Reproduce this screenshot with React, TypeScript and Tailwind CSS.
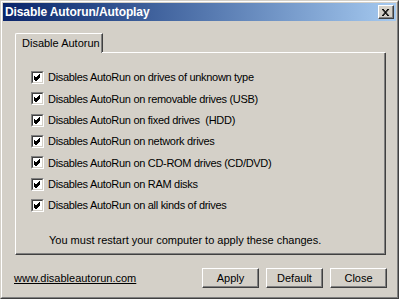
import React from "react";

const items = [
  "Disables AutoRun on drives of unknown type",
  "Disables AutoRun on removable drives (USB)",
  "Disables AutoRun on fixed drives  (HDD)",
  "Disables AutoRun on network drives",
  "Disables AutoRun on CD-ROM drives (CD/DVD)",
  "Disables AutoRun on RAM disks",
  "Disables AutoRun on all kinds of drives",
];

function CheckBox() {
  return (
    <span className="block h-[13px] w-[13px] shrink-0 border border-t-[#808080] border-l-[#808080] border-r-white border-b-white">
      <span className="block h-full w-full border border-t-[#404040] border-l-[#404040] border-r-[#d4d0c8] border-b-[#d4d0c8] bg-white">
        <svg width="9" height="9" viewBox="0 0 9 9" className="block">
          <path d="M1 3.5 L3 5.5 L7 1.5 M1 4.5 L3 6.5 L7 2.5 M1 5.5 L3 7.5 L7 3.5" stroke="#000" strokeWidth="1" fill="none" shapeRendering="crispEdges" />
        </svg>
      </span>
    </span>
  );
}

function Button({ label }: { label: string }) {
  return (
    <button className="h-[20px] w-[57px] border border-t-white border-l-white border-r-[#404040] border-b-[#404040] bg-[#d4d0c8] text-[11px] text-black shadow-[inset_-1px_-1px_0_#808080]">
      {label}
    </button>
  );
}

export default function App() {
  return (
    <div
      className="h-[299px] w-[399px] border border-t-[#d4d0c8] border-l-[#d4d0c8] border-r-[#404040] border-b-[#404040] bg-[#d4d0c8] text-black"
      style={{ fontFamily: '"Liberation Sans", Arial, sans-serif' }}
    >
      <div className="flex h-full flex-col border border-t-white border-l-white border-r-[#808080] border-b-[#808080] p-px">
        {/* title bar */}
        <div className="flex h-[18px] items-center justify-between bg-gradient-to-r from-[#0a246a] to-[#a6caf0] pl-[2px] pr-[2px]">
          <span className="text-[12px] font-bold leading-none tracking-[-0.1px] text-white">Disable Autorun/Autoplay</span>
          <span className="flex h-[14px] w-[16px] items-center justify-center border border-t-white border-l-white border-r-[#404040] border-b-[#404040] bg-[#d4d0c8] shadow-[inset_-1px_-1px_0_#808080]">
            <svg width="8" height="7" viewBox="0 0 8 7" className="block">
              <path d="M0 0 L6 7 M1 0 L7 7 M6 0 L0 7 M7 0 L1 7" stroke="#000" strokeWidth="1" fill="none" />
            </svg>
          </span>
        </div>

        {/* tab */}
        <div className="ml-[12px] mt-[12px] flex">
          <div className="flex h-[20px] w-[88px] items-center rounded-tl-[2px] border-t border-l border-r border-t-white border-l-white border-r-[#404040] pl-[6px] text-[11px] shadow-[inset_-1px_0_0_#808080]">
            Disable Autorun
          </div>
          <div className="flex-1" />
        </div>

        {/* panel */}
        <div className="relative ml-[12px] mr-[10px] h-[202px] border border-t-0 border-l-white border-r-[#404040] border-b-[#404040] shadow-[inset_-1px_-1px_0_#808080]">
          <div className="absolute -top-px left-[86px] right-0 h-px bg-white" />
          <div className="flex flex-col pl-[15px] pt-[14px]">
            {items.map((t) => (
              <label key={t} className="flex h-[21.33px] items-center gap-[4px] text-[11px] tracking-[-0.3px]">
                <CheckBox />
                <span className="whitespace-pre">{t}</span>
              </label>
            ))}
          </div>
          <div className="pl-[33px] pt-[16px] text-[11px]">You must restart your computer to apply these changes.</div>
        </div>

        {/* footer */}
        <div className="ml-[11px] mr-[9px] mt-[13px] flex items-center justify-between">
          <span className="text-[11px] underline">www.disableautorun.com</span>
          <div className="flex gap-[7px]">
            <Button label="Apply" />
            <Button label="Default" />
            <Button label="Close" />
          </div>
        </div>
      </div>
    </div>
  );
}
